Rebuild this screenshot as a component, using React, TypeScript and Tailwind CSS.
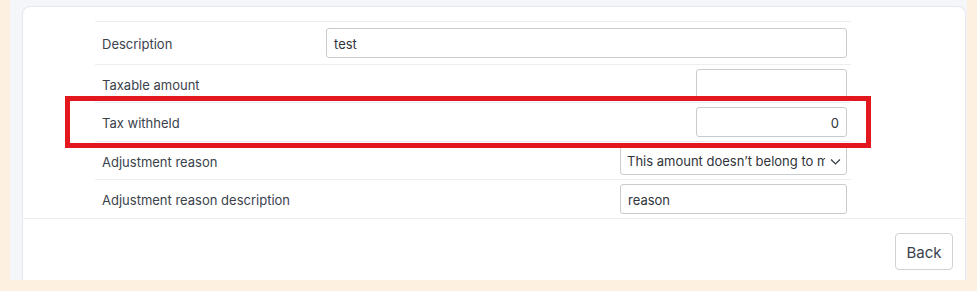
import React from "react";

const font = { fontFamily: "Inter, 'Noto Sans', sans-serif" };

function Row({
  label,
  h,
  children,
}: {
  label: string;
  h: string;
  children: React.ReactNode;
}) {
  return (
    <div className={`flex items-center border-t border-[#ebedf0] ${h}`}>
      <div className="w-[224px] pl-[7px] pt-[4px] text-[13px] text-[#3b424c]">{label}</div>
      <div className="flex flex-1 justify-end pr-[4px]">{children}</div>
    </div>
  );
}

export default function App() {
  return (
    <div
      className="w-[977px] h-[291px] bg-[#fdf0e1] pl-[10px] pr-[10px] pb-[11px] overflow-hidden"
      style={font}
    >
      <div className="h-[280px] bg-[#f5f6f9] pl-[12px] pt-[6px] pr-[1px] flex">
        <div className="relative flex-1 flex flex-col bg-white border border-b-0 border-[#e6e8ec] rounded-t-lg">
          <div className="pt-[14px] ml-[72px] w-[756px]">
            <Row label="Description" h="h-[43px]">
              <div className="w-[521px] h-[30px] border border-[#c9cbce] rounded-[3px] flex items-center px-[7px] pt-[3px] text-[13px] text-[#2f343a]">
                test
              </div>
            </Row>
            <Row label="Taxable amount" h="h-[38px]">
              <div className="w-[151px] h-[30px] border border-[#c9cbce] rounded-[3px]" />
            </Row>
            <Row label="Tax withheld" h="h-[39px]">
              <div className="w-[151px] h-[30px] border border-[#c9cbce] rounded-[3px] flex items-center justify-end px-[7px] pt-[3px] text-[13px] text-[#2f343a]">
                0
              </div>
            </Row>
            <Row label="Adjustment reason" h="h-[38px]">
              <div className="w-[227px] h-[29px] border border-[#c9cbce] rounded-[3px] flex items-center pl-[6px] pr-[4px] text-[13px] text-[#2f343a] overflow-hidden">
                <span className="flex-1 whitespace-nowrap overflow-hidden pt-[3px]">
                  This amount doesn’t belong to me
                </span>
                <svg
                  width="13"
                  height="13"
                  viewBox="0 0 16 16"
                  fill="none"
                  stroke="#3a3f45"
                  strokeWidth="1.6"
                  className="ml-[4px] shrink-0 mt-[1px]"
                >
                  <path d="M2.5 5.5 L8 11 L13.5 5.5" />
                </svg>
              </div>
            </Row>
            <Row label="Adjustment reason description" h="h-[39px]">
              <div className="w-[227px] h-[30px] border border-[#c9cbce] rounded-[3px] flex items-center px-[7px] pt-[3px] text-[13px] text-[#2f343a]">
                reason
              </div>
            </Row>
          </div>
          <div className="border-t border-[#ebedf0] flex justify-end pt-[14px] pr-[12px]">
            <button className="w-[58px] h-[37px] border border-[#cfd2d6] rounded-[4px] bg-white pt-[3px] text-[15px] text-[#3b424c]">
              Back
            </button>
          </div>
          <div className="absolute left-[42px] top-[89px] w-[806px] h-[52px] border-[5px] border-[#e3171e] pointer-events-none" />
        </div>
      </div>
    </div>
  );
}
